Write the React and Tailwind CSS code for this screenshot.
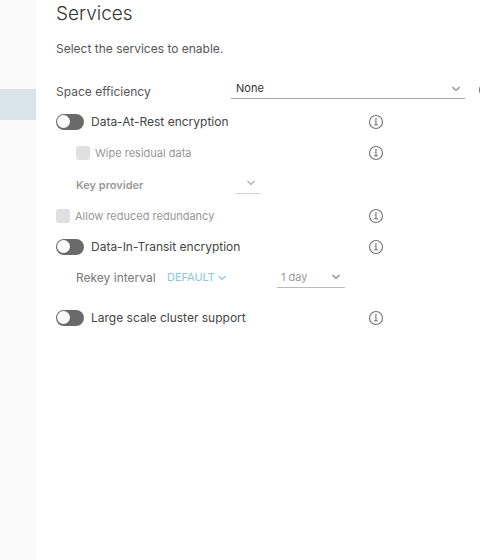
import React, { useState } from 'react';

const InfoIcon = () => (
  <svg viewBox="1 1 34 34" className="size-4 shrink-0" fill="#757575" aria-hidden="true">
    <circle cx="17.93" cy="11.4" r="1.8" />
    <path d="M21 23h-2v-8h-3a1 1 0 0 0 0 2h1v6h-2a1 1 0 1 0 0 2h6a1 1 0 1 0 0-2Z" stroke="#757575" strokeWidth="0.3" />
    <path d="M18 3a15 15 0 1 0 15 15A15 15 0 0 0 18 3Zm0 27.6a12.6 12.6 0 1 1 12.6-12.6 12.6 12.6 0 0 1-12.6 12.6Z" />
  </svg>
);

const InfoButton = ({ label }) => (
  <button type="button" aria-label={label} className="shrink-0">
    <InfoIcon />
  </button>
);

const Chevron = ({ className }) => (
  <svg viewBox="0 0 10 6" className={className} fill="none" stroke="currentColor" strokeWidth="1.2" aria-hidden="true">
    <path d="M1.5 1l3.500 3.500 3.500-3.500" />
  </svg>
);

const Toggle = ({ id, label }) => {
  const [on, setOn] = useState(false);
  return (
    <>
      <input
        id={id}
        type="checkbox"
        role="switch"
        checked={on}
        onChange={() => setOn(!on)}
        className="flex h-4 w-7 shrink-0 appearance-none items-center rounded-full bg-[#6a6a6a] px-px before:size-[13px] before:rounded-full before:bg-[#fafafa] checked:justify-end checked:bg-[#5aa220]"
      />
      <label htmlFor={id} className="ml-[7px] text-xs text-[#454545]">{label}</label>
    </>
  );
};

const DisabledCheckbox = ({ id, label }) => (
  <>
    <input
      id={id}
      type="checkbox"
      disabled
      className="size-3.5 shrink-0 appearance-none rounded-[3px] bg-[#e0e0e0]"
    />
    <label htmlFor={id} className="ml-[5px] text-[11px] leading-4 text-[#969696]">{label}</label>
  </>
);

// One line of the form, with an optional info button at its end
const Row = ({ info, indent, children }) => (
  <div className={`flex h-[31px] max-w-[328px] items-center ${indent ? 'pl-5' : ''}`}>
    <div className="flex flex-1 items-center">{children}</div>
    {info && <InfoButton label={info} />}
  </div>
);

const App = () => {
  return (
    <div className="flex min-h-screen overflow-hidden bg-white font-['Inter','Noto_Sans',sans-serif]">
      <aside className="w-9 shrink-0 bg-[#fafafa] pt-[89px]">
        <div className="h-[31px] bg-[#d9e4ea]" />
      </aside>

      <main className="min-w-0 flex-1 pl-5">
        <h1 className="text-[19px] leading-7 font-light text-[#333333]">Services</h1>
        <p className="mt-[11px] text-xs leading-5 text-[#565656]">Select the services to enable.</p>

        <form className="mt-[15px]">
          <div className="-mr-3.5 flex h-8 items-start">
            <label htmlFor="space" className="w-[175px] shrink-0 pt-2 text-xs leading-5 text-[#565656]">
              Space efficiency
            </label>
            <div className="relative flex-1 pt-px">
              <select
                id="space"
                className="block h-6 w-full appearance-none border-b border-[#a8a8a8] px-[5px] pt-1 text-[11px] text-[#333333]"
              >
                <option>None</option>
                <option>Compression only</option>
              </select>
              <Chevron className="pointer-events-none absolute top-3 right-1 h-1.5 w-2.5 text-[#888888]" />
            </div>
            <div className="ml-[13px] flex pt-2">
              <InfoButton label="About space efficiency" />
            </div>
          </div>

          <Row info="About data-at-rest encryption">
            <Toggle id="rest" label="Data-At-Rest encryption" />
          </Row>
          <Row indent info="About wiping residual data">
            <DisabledCheckbox id="wipe" label="Wipe residual data" />
          </Row>
          <div className="pb-px">
            <Row indent>
              <label htmlFor="provider" className="w-40 pt-1 text-[11px] font-semibold text-[#999999]">
                Key provider
              </label>
              <div className="relative">
                <select
                  id="provider"
                  disabled
                  className="block h-5 w-6 appearance-none border-b border-[#d0d0d0]"
                />
                <Chevron className="pointer-events-none absolute top-1.5 right-1 h-1.5 w-2.5 text-[#aaaaaa]" />
              </div>
            </Row>
          </div>
          <Row info="About reduced redundancy">
            <DisabledCheckbox id="redundancy" label="Allow reduced redundancy" />
          </Row>
          <Row info="About data-in-transit encryption">
            <Toggle id="transit" label="Data-In-Transit encryption" />
          </Row>
          <Row indent>
            <label htmlFor="rekey" className="w-[91px] text-xs text-[#777777]">Rekey interval</label>
            <button type="button" className="flex w-[110px] items-center gap-0.5 text-[11px] text-[#8cc5e3]">
              DEFAULT
              <Chevron className="h-1.5 w-2.5" />
            </button>
            <div className="relative">
              <select
                id="rekey"
                disabled
                className="block h-5 w-[68px] appearance-none border-b border-[#bbbbbb] px-1 text-[11px] text-[#999999] opacity-100"
              >
                <option>1 day</option>
              </select>
              <Chevron className="pointer-events-none absolute top-1.5 right-1 h-1.5 w-2.5 text-[#888888]" />
            </div>
          </Row>
          <div className="pt-[9px]">
            <Row info="About large scale cluster support">
              <Toggle id="large" label="Large scale cluster support" />
            </Row>
          </div>
        </form>
      </main>
    </div>
  );
};

export default App;
